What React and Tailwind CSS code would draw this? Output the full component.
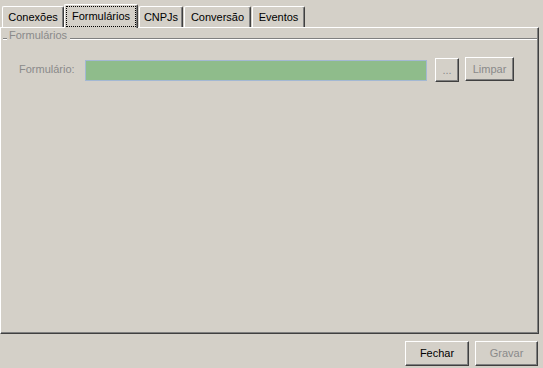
import React from 'react';

const FONT = { fontFamily: '"Liberation Sans", Arial, sans-serif' };

function Tab({ label, className }) {
    return (
        <div className={`h-[21px] border-t border-l border-r border-t-white border-l-white border-r-[#404040] rounded-t-[2px] bg-[#d4d0c8] shadow-[inset_-1px_0_0_#808080] flex items-center justify-center text-[11px] leading-[13px] text-black ${className}`}>
            {label}
        </div>
    );
}

function Button({ children, disabled, className }) {
    return (
        <button
            className={`border border-t-white border-l-white border-r-[#404040] border-b-[#404040] shadow-[inset_-1px_-1px_0_#808080] bg-[#d4d0c8] flex items-center justify-center text-[11px] leading-[13px] ${disabled ? 'text-[#8a8a8a]' : 'text-black'} ${className}`}
        >
            {children}
        </button>
    );
}

export default function App() {
    return (
        <div style={FONT} className="w-[543px] h-[368px] bg-[#d4d0c8] flex flex-col overflow-hidden select-none">
            {/* tabs */}
            <div className="h-[27px] flex items-end shrink-0">
                <Tab label="Conexões" className="ml-[2px] w-[62px]" />
                <div className="relative z-10 -mb-px h-[24px] w-[74px] border-t border-l border-r border-t-white border-l-white border-r-[#404040] rounded-t-[2px] bg-[#d4d0c8] shadow-[inset_-1px_0_0_#808080] pt-px pl-px">
                    <div className="w-[70px] h-[21px] border border-dotted border-black flex items-center justify-center text-[11px] leading-[13px] text-black">
                        Formulários
                    </div>
                </div>
                <Tab label="CNPJs" className="ml-[1px] w-[44px]" />
                <Tab label="Conversão" className="ml-[1px] w-[67px]" />
                <Tab label="Eventos" className="ml-[1px] w-[53px]" />
            </div>

            {/* panel */}
            <div className="w-[539px] h-[307px] shrink-0 border border-t-white border-l-white border-r-[#404040] border-b-[#404040] shadow-[inset_-1px_-1px_0_#808080] flex flex-col">
                <div className="mt-px h-[13px] flex items-start">
                    <div className="ml-[2px] mt-[9px] w-[4px] h-[2px] border-t border-b border-t-[#808080] border-b-white" />
                    <span className="ml-[2px] text-[11px] leading-[13px] text-[#8a8a8a]">Formulários</span>
                    <div className="ml-[3px] mr-[1px] mt-[9px] flex-1 h-[2px] border-t border-b border-t-[#808080] border-b-white" />
                </div>

                <div className="mt-[15px] flex items-start">
                    <div className="ml-[18px] w-[66px] h-[24px] flex items-center text-[11px] leading-[13px] text-[#8a8a8a]">
                        Formulário:
                    </div>
                    <div className="mt-[3px] w-[342px] h-[21px] border border-[#a3b8d3] bg-[#8fbc8b]" />
                    <Button disabled className="ml-[8px] mt-px w-[24px] h-[24px]">...</Button>
                    <Button disabled className="ml-[6px] w-[49px] h-[24px]">Limpar</Button>
                </div>
            </div>

            {/* footer */}
            <div className="mt-[7px] mr-[5px] flex justify-end gap-[6px]">
                <Button className="w-[64px] h-[25px]">Fechar</Button>
                <Button disabled className="w-[63px] h-[25px]">Gravar</Button>
            </div>
        </div>
    );
}
